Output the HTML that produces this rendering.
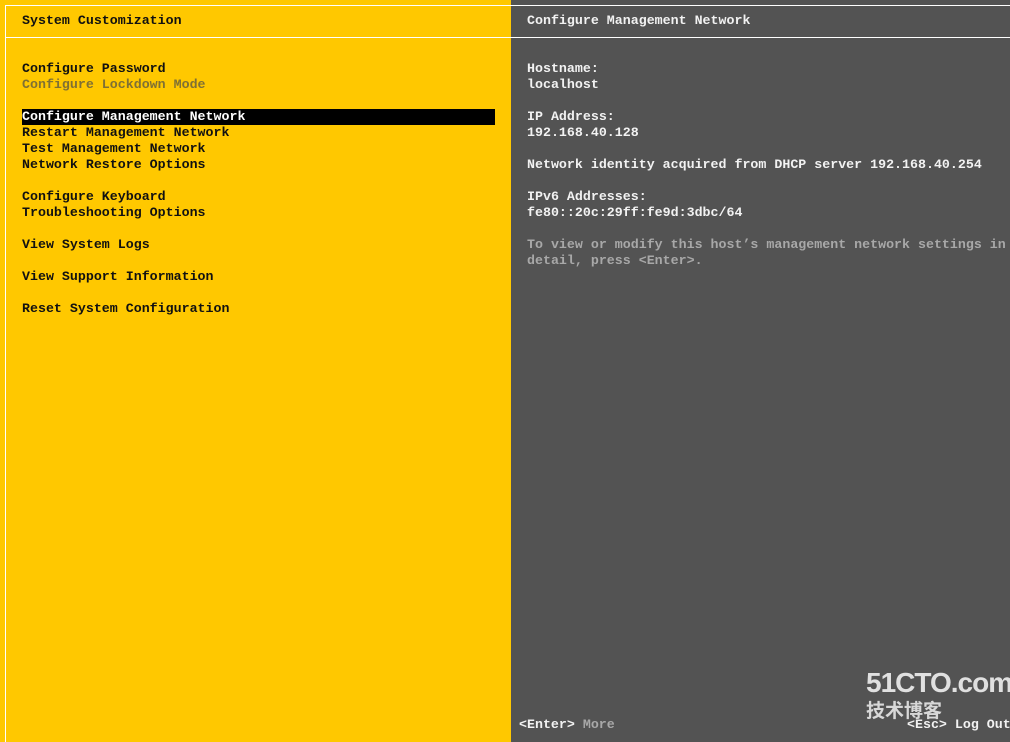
<!DOCTYPE html>
<html><head><meta charset="utf-8"><style>
html,body{margin:0;padding:0;}
body{width:1010px;height:742px;position:relative;overflow:hidden;background:#535353;font-family:"Liberation Mono","DejaVu Sans Mono",monospace;font-size:13.3px;}
#L{position:absolute;left:0;top:0;width:511px;height:742px;background:#ffc800;}
.hl{position:absolute;background:#fff;}
.t{position:absolute;height:16px;line-height:16px;white-space:pre;font-weight:bold;margin-top:1px;}
.k{color:#111;}
.d{color:#7f7034;}
.w{color:#f2f2f2;}
.g{color:#a8a8a8;}
</style></head><body>
<div id="L"></div>
<div class="hl" style="left:5px;top:5px;width:1005px;height:1px"></div>
<div class="hl" style="left:5px;top:5px;width:1px;height:737px"></div>
<div class="hl" style="left:5px;top:37px;width:1005px;height:1px"></div>
<div style="position:absolute;left:22px;top:109px;width:473px;height:16px;background:#000"></div>

<div class="t k" style="left:22px;top:12px">System Customization</div>
<div class="t k" style="left:22px;top:60px">Configure Password</div>
<div class="t d" style="left:22px;top:76px">Configure Lockdown Mode</div>
<div class="t" style="left:22px;top:108px;color:#fff">Configure Management Network</div>
<div class="t k" style="left:22px;top:124px">Restart Management Network</div>
<div class="t k" style="left:22px;top:140px">Test Management Network</div>
<div class="t k" style="left:22px;top:156px">Network Restore Options</div>
<div class="t k" style="left:22px;top:188px">Configure Keyboard</div>
<div class="t k" style="left:22px;top:204px">Troubleshooting Options</div>
<div class="t k" style="left:22px;top:236px">View System Logs</div>
<div class="t k" style="left:22px;top:268px">View Support Information</div>
<div class="t k" style="left:22px;top:300px">Reset System Configuration</div>

<div class="t w" style="left:527px;top:12px">Configure Management Network</div>
<div class="t w" style="left:527px;top:60px">Hostname:</div>
<div class="t w" style="left:527px;top:76px">localhost</div>
<div class="t w" style="left:527px;top:108px">IP Address:</div>
<div class="t w" style="left:527px;top:124px">192.168.40.128</div>
<div class="t w" style="left:527px;top:156px">Network identity acquired from DHCP server 192.168.40.254</div>
<div class="t w" style="left:527px;top:188px">IPv6 Addresses:</div>
<div class="t w" style="left:527px;top:204px">fe80::20c:29ff:fe9d:3dbc/64</div>
<div class="t g" style="left:527px;top:236px">To view or modify this host’s management network settings in</div>
<div class="t g" style="left:527px;top:252px">detail, press &lt;Enter&gt;.</div>

<div class="t" style="left:519px;top:716px"><span class="w">&lt;Enter&gt;</span> <span class="g">More</span></div>
<div class="t w" style="left:907px;top:716px">&lt;Esc&gt; Log Out</div>
<div style="position:absolute;left:866px;top:668px;font-family:'Liberation Sans',sans-serif;font-weight:bold;font-size:28px;line-height:30px;color:#e0e0e0;letter-spacing:-1px">51CTO.com</div>
<div style="position:absolute;left:866px;top:700px;font-family:'Liberation Sans','Noto Sans CJK SC',sans-serif;font-weight:bold;font-size:19px;line-height:24px;color:#d8d8d8">技术博客</div>
</body></html>
